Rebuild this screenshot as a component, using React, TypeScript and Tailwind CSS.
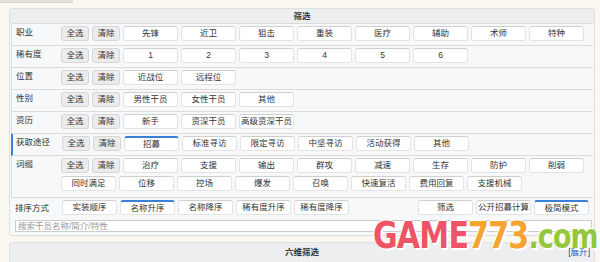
import React from 'react';

const FONT = { fontFamily: '"Liberation Sans", "Noto Sans CJK SC", sans-serif' };

type Row = { label: string; lines: string[][]; active?: string; marked?: boolean; extra?: string };

const rows: Row[] = [
  { label: '职业', lines: [['先锋', '近卫', '狙击', '重装', '医疗', '辅助', '术师', '特种']] },
  { label: '稀有度', lines: [['1', '2', '3', '4', '5', '6']] },
  { label: '位置', lines: [['近战位', '远程位']] },
  { label: '性别', lines: [['男性干员', '女性干员', '其他']] },
  { label: '资历', lines: [['新手', '资深干员', '高级资深干员']] },
  { label: '获取途径', lines: [['招募', '标准寻访', '限定寻访', '中坚寻访', '活动获得', '其他']], active: '招募', marked: true },
  {
    label: '词缀',
    lines: [
      ['治疗', '支援', '输出', '群攻', '减速', '生存', '防护', '削弱'],
      ['位移', '控场', '爆发', '召唤', '快速复活', '费用回复', '支援机械'],
    ],
    extra: '同时满足',
  },
];

const GrayBtn = ({ children }: { children: React.ReactNode }) => (
  <button className="w-[28px] h-[15px] flex items-center justify-center rounded-[3px] border border-[#d6d6d6] bg-[#ececec] text-[8.5px] leading-none text-[#333]">
    {children}
  </button>
);

const OptBtn = ({ children, active }: { children: React.ReactNode; active?: boolean }) => (
  <button
    className={
      'w-[55px] h-[15px] flex items-center justify-center rounded-[3px] border border-[#e3e3e3] bg-white text-[8.5px] leading-none text-[#333] ' +
      (active ? 'border-t-2 border-t-[#3b7fd9]' : 'border-t-[#cfcfcf]')
    }
  >
    {children}
  </button>
);

export default function App() {
  return (
    <div className="relative w-[600px] h-[262px] overflow-hidden bg-[#fbf8f1] text-[#333] text-[9px] leading-none" style={FONT}>
      <div className="w-[73px] h-[3px] bg-[#e4e1d9] border-b border-[#d6d3cb]" />

      <div className="ml-[9px] mt-[5px] w-[586px] border border-[#dedfe1] rounded-[3px] bg-[#f7f8f9]">
        <div className="h-[14px] flex items-center justify-center bg-[#eceef0] text-[8.5px] font-bold rounded-t-[3px]">
          筛选
        </div>

        <div className="ml-[1px] mr-[1px] border-l border-t border-[#dcdcdc]">
          {rows.map((r) => (
            <div
              key={r.label}
              className={'flex border-b border-[#dcdcdc] ' + (r.marked ? 'border-l-2 border-l-[#3b7fd9] -ml-[1px]' : '')}
            >
              <div className={'w-[49px] pt-[4px] text-[8.5px] leading-none ' + (r.marked ? 'pl-[3px]' : 'pl-[4px]')}>
                {r.label}
              </div>
              <div className={'flex flex-col gap-[3px] pt-[2px] ' + (r.extra ? 'pb-[6px]' : 'pb-[4px]')}>
                <div className="flex gap-[3px]">
                  <GrayBtn>全选</GrayBtn>
                  <GrayBtn>清除</GrayBtn>
                  {r.lines[0].map((o, i) => (
                    <OptBtn key={i} active={o === r.active}>
                      {o}
                    </OptBtn>
                  ))}
                </div>
                {r.extra && (
                  <div className="flex gap-[3px]">
                    <OptBtn>{r.extra}</OptBtn>
                    {r.lines[1].map((o) => (
                      <OptBtn key={o}>{o}</OptBtn>
                    ))}
                  </div>
                )}
              </div>
            </div>
          ))}
        </div>

        <div className="flex items-start pt-[2px] pr-[5px]">
          <div className="w-[52px] pl-[5px] pt-[4px] text-[8.5px] leading-none">排序方式</div>
          <div className="flex gap-[3px]">
            <OptBtn>实装顺序</OptBtn>
            <OptBtn active>名称升序</OptBtn>
            <OptBtn>名称降序</OptBtn>
            <OptBtn>稀有度升序</OptBtn>
            <OptBtn>稀有度降序</OptBtn>
          </div>
          <div className="ml-auto flex gap-[3px]">
            <OptBtn>筛选</OptBtn>
            <OptBtn>公开招募计算</OptBtn>
            <OptBtn active>极简模式</OptBtn>
          </div>
        </div>

        <div className="pl-[5px] pr-[2px] pt-[5px] pb-[3px]">
          <input
            placeholder="搜索干员名称/简介/特性"
            className="block w-full h-[12px] border border-[#cdcdcd] bg-white px-[2px] text-[8.5px] leading-none placeholder:text-[#999] outline-none"
          />
        </div>
      </div>

      <div className="ml-[9px] mt-[6px] w-[586px] h-[30px] border border-[#dedfe1] rounded-[3px] bg-[#eceef0]">
        <div className="relative h-[18px] flex items-center justify-center text-[8.5px] font-bold">
          六维筛选
          <span className="absolute right-[4px] top-[5px] text-[8.5px] font-normal text-[#1b3f8f]">
            [<span className="text-[#2a59c0]">展开</span>]
          </span>
        </div>
      </div>

      <div
        className="absolute left-[373px] top-[216px] flex items-baseline font-bold leading-none tracking-[-1px] origin-left scale-x-[0.79]"
        style={{ fontFamily: '"DejaVu Sans", sans-serif', textShadow: '2px 2px 0 #ffffff, -1px -1px 0 #ffffff' }}
      >
        <span className="text-[38px] text-[#ef5466]">GAME</span>
        <span className="text-[38px] text-[#f6a430]">773</span>
        <span className="text-[34px] text-[#93c83c]">.com</span>
      </div>
    </div>
  );
}
